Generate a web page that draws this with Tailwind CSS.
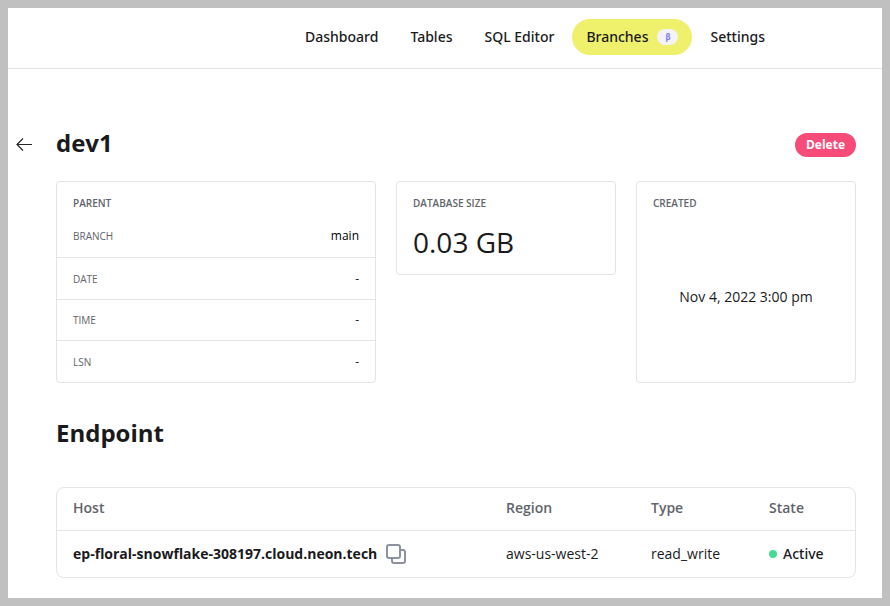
<!DOCTYPE html>
<html lang="en">
<head>
<meta charset="utf-8">
<meta name="viewport" content="width=device-width, initial-scale=1">
<title>dev1 – Branches</title>
<script src="https://cdn.jsdelivr.net/npm/@tailwindcss/browser@4"></script>
</head>
<body class="flex min-h-screen flex-col bg-[#c0c0c0] p-2 font-['Open_Sans',sans-serif] text-sm text-[#1a1a1c]">
<div class="flex-1 bg-white">
  <header class="border-b border-[#e2e3e7] py-[11px] pb-[13px]">
    <nav class="flex justify-center gap-1 pl-[180px] font-['Noto_Sans',sans-serif] font-medium whitespace-nowrap" aria-label="Main">
      <a href="#" class="flex h-9 items-center px-3.5">Dashboard</a>
      <a href="#" class="flex h-9 items-center px-3.5">Tables</a>
      <a href="#" class="flex h-9 items-center px-3.5">SQL Editor</a>
      <a href="#" aria-current="page" class="flex h-9 items-center gap-[9px] rounded-full bg-[#eff06c] px-3.5">Branches <span class="flex h-4 w-[21px] items-center justify-center rounded-full bg-[#f3f3f8] text-[8px] font-bold text-[#7f7cf5]">β</span></a>
      <a href="#" class="flex h-9 items-center px-3.5">Settings</a>
    </nav>
  </header>
  <main class="pt-[58px] pr-[26px] pb-5 pl-12">
    <div class="flex items-center justify-between">
      <div class="-ml-10 flex items-center gap-6">
        <a href="#" aria-label="Back" class="block size-4">
          <svg class="size-4" viewBox="0 0 16 16" fill="none" stroke="#27272a" stroke-width="1.2"><path d="M16.500 9.500H1.200M7 3.500 1 9.500l6 6"/></svg>
        </a>
        <h1 class="text-2xl font-bold">dev1</h1>
      </div>
      <button type="button" class="mt-1 h-6 rounded-full bg-[#f74b7a] px-[11px] text-xs font-bold text-white">Delete</button>
    </div>
    <div class="mt-[22px] grid grid-cols-[320fr_220fr_220fr] gap-5">
      <section class="rounded border border-[#e4e4e8]">
        <h2 class="px-4 pt-[13px] text-[10px] leading-4 font-semibold text-[#61646b]">PARENT</h2>
        <dl class="text-xs">
          <div class="mt-1 flex h-[43px] items-center justify-between border-b border-[#e4e4e8] px-4"><dt class="pt-[2px] text-[10px] text-[#61646b]">BRANCH</dt><dd class="text-black">main</dd></div>
          <div class="flex h-[42px] items-center justify-between border-b border-[#e4e4e8] px-4"><dt class="pt-[2px] text-[10px] text-[#61646b]">DATE</dt><dd>-</dd></div>
          <div class="flex h-[41px] items-center justify-between border-b border-[#e4e4e8] px-4"><dt class="pt-[2px] text-[10px] text-[#61646b]">TIME</dt><dd>-</dd></div>
          <div class="flex h-[41px] items-center justify-between px-4"><dt class="pt-[2px] text-[10px] text-[#61646b]">LSN</dt><dd>-</dd></div>
        </dl>
      </section>
      <section class="self-start rounded border border-[#e4e4e8] px-4 pt-[13px] pb-[14px]">
        <h2 class="text-[10px] leading-4 font-semibold text-[#61646b]">DATABASE SIZE</h2>
        <p class="mt-[13px] text-[28px] leading-9">0.03 GB</p>
      </section>
      <section class="flex flex-col rounded border border-[#e4e4e8] px-4 pt-[13px]">
        <h2 class="text-[10px] leading-4 font-semibold text-[#61646b]">CREATED</h2>
        <p class="flex flex-1 items-center justify-center">Nov 4, 2022 3:00 pm</p>
      </section>
    </div>
    <h2 class="mt-[34px] text-2xl font-bold">Endpoint</h2>
    <div class="mt-[38px] rounded-lg border border-[#e4e4e8]">
      <table class="w-full table-fixed text-left">
        <colgroup><col><col class="w-[145px]"><col class="w-[118px]"><col class="w-[86px]"></colgroup>
        <thead class="text-[#61646b]">
          <tr class="h-[42px] border-b border-[#e4e4e8]">
            <th scope="col" class="pb-px pl-4 font-semibold">Host</th>
            <th scope="col" class="pb-px font-semibold">Region</th>
            <th scope="col" class="pb-px font-semibold">Type</th>
            <th scope="col" class="pb-px font-semibold">State</th>
          </tr>
        </thead>
        <tbody>
          <tr class="h-[47px]">
            <td class="pl-4"><div class="flex items-center gap-2 font-bold">ep-floral-snowflake-308197.cloud.neon.tech
              <button type="button" aria-label="Copy host"><svg class="size-[22px]" viewBox="0 0 22 22" fill="none" stroke="#8d929f" stroke-width="2"><rect x="2" y="2" width="13" height="13" rx="2"/><path d="M7 15v3a2 2 0 0 0 2 2h9a2 2 0 0 0 2-2V9a2 2 0 0 0-2-2h-3"/></svg></button></div></td>
            <td>aws-us-west-2</td>
            <td>read_write</td>
            <td><div class="flex items-center gap-1.5 font-['Noto_Sans',sans-serif] font-medium"><span class="size-2 rounded-full bg-[#45dc92]"></span>Active</div></td>
          </tr>
        </tbody>
      </table>
    </div>
  </main>
</div>
</body>
</html>
